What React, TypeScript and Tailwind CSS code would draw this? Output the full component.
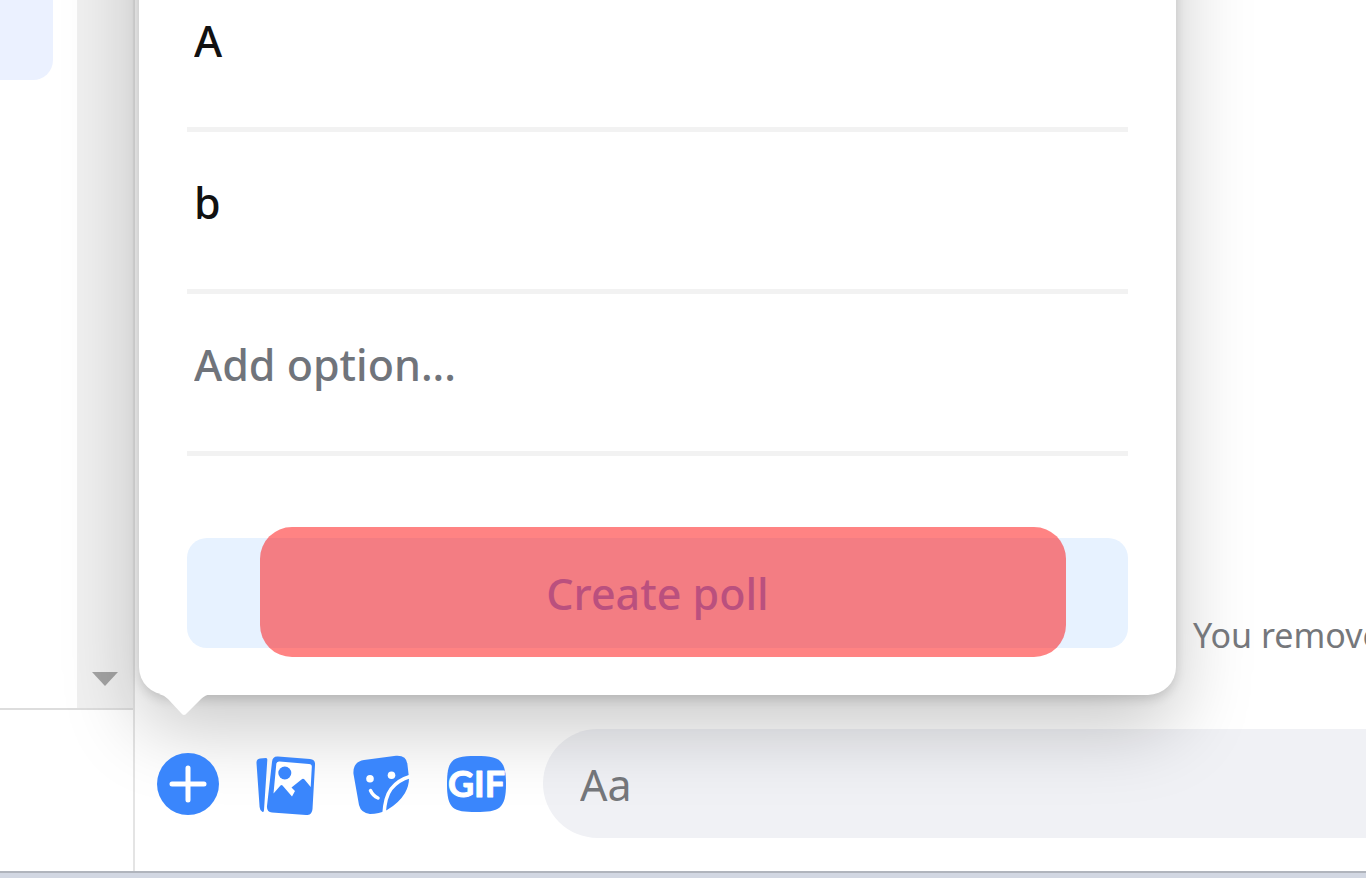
import React, { useState } from 'react';

interface OptionRowProps {
    label: string;
    value: string;
    placeholder?: string;
    onChange: (value: string) => void;
}

const OptionRow = ({ label, value, placeholder, onChange }: OptionRowProps) => (
    <input
        type="text"
        aria-label={label}
        value={value}
        placeholder={placeholder}
        onChange={e => onChange(e.target.value)}
        className="block w-full h-[162px] pl-[7px] pb-4 border-b-[5px] border-[#f2f2f2] bg-transparent text-[43px] font-medium text-[#111111] placeholder:text-[#70747b] placeholder:opacity-100 outline-none"
    />
);

const PlusIcon = () => (
    <svg viewBox="0 0 62 62" className="w-full h-full">
        <circle cx="31" cy="31" r="31" fill="#3a86fc" />
        <path d="M31 15v32M15 31h32" stroke="#fff" strokeWidth="5" strokeLinecap="round" />
    </svg>
);

const PhotosIcon = () => (
    <svg viewBox="0 0 62 62" className="w-full h-full">
        <path d="M7 5.500L13 5Q14.500 5 14.300 7L11 57Q10.800 60 9 58.500Q7 57.500 6.600 54L3.500 10Q3.300 6 7 5.500Z" fill="#3a86fc" />
        <path d="M25 3.500L57 6Q62.500 6.500 62 12L59.500 56Q59 62.500 53 62L19 59.500Q13.500 59 14 53L19 9Q19.500 3 25 3.500Z" fill="#3a86fc" />
        <path d="M26.500 8.500L56 11Q59 11.300 58.800 14L57.700 34L51.500 26.500Q50 25 48.500 26.500L38.500 34.500L42 38L39 43.500L29.500 32.500Q28.500 31.500 27.500 32.500L20.500 40.500L23.300 11Q23.600 8.200 26.500 8.500Z" fill="#fff" />
        <circle cx="31.800" cy="20" r="6.500" fill="#3a86fc" />
    </svg>
);

const StickerIcon = () => (
    <svg viewBox="0 0 62 62" className="w-full h-full">
        <path d="M15 7L47 2.700Q58 2 58.500 12L60 25Q60 33 56 40Q50 50 38 57Q30 61 21 61Q12 60 10 52L4.500 21Q3.500 9 15 7Z" fill="#3a86fc" />
        <path d="M61 23.500Q49 27 42 36Q36 44 35 61" fill="none" stroke="#fff" strokeWidth="3.500" />
        <circle cx="21" cy="25.700" r="3.800" fill="#fff" />
        <circle cx="42.500" cy="22.300" r="3.800" fill="#fff" />
        <path d="M21.500 37.500Q24 43 29 45" fill="none" stroke="#fff" strokeWidth="3.500" strokeLinecap="round" />
    </svg>
);

const GifIcon = () => (
    <svg viewBox="0 0 62 62" className="w-full h-full">
        <path d="M31 3C54 3 61 6 61 31S54 59 31 59S2 56 2 31S8 3 31 3Z" fill="#3a86fc" />
        <text x="31.500" y="44" textAnchor="middle" fill="#fff" stroke="#fff" strokeWidth="1" strokeLinejoin="round" className="font-[Lato,sans-serif] text-[36px] font-bold">GIF</text>
    </svg>
);

const ACTIONS = [
    { label: 'More actions', Icon: PlusIcon },
    { label: 'Attach photos', Icon: PhotosIcon },
    { label: 'Choose a sticker', Icon: StickerIcon },
    { label: 'Choose a GIF', Icon: GifIcon },
];

const Sidebar = () => (
    <aside className="w-[135px] shrink-0 flex flex-col border-r-2 border-[#e4e4e4]">
        <div className="flex-1 flex justify-between border-b-2 border-[#dddddd]">
            <div className="w-[53px] h-20 rounded-br-[20px] bg-[#ebf1ff]" />
            <div className="w-14 bg-[#f0f0f0] flex flex-col justify-end items-center pb-[22px]">
                <svg viewBox="0 0 26 14" className="w-[26px] h-[14px]">
                    <path d="M0 0h26L13 14z" fill="#a3a3a3" />
                </svg>
            </div>
        </div>
        <div className="h-[161px]" />
    </aside>
);

const PollPopover = () => {
    const [options, setOptions] = useState(['', 'A', 'b', '']);

    const update = (index: number, value: string) =>
        setOptions(options.map((o, i) => (i === index ? value : o)));

    return (
        <form
            onSubmit={e => e.preventDefault()}
            className="absolute left-1 bottom-[176px] w-[1037px] px-12 pt-16 pb-[47px] bg-white rounded-[28px] shadow-[0_32px_78px_rgba(0,0,0,0.22),0_4px_11px_rgba(0,0,0,0.14)]"
        >
            {options.map((option, i) => (
                <OptionRow
                    key={i}
                    label={`Option ${i}`}
                    value={option}
                    placeholder={i === options.length - 1 ? 'Add option...' : undefined}
                    onChange={value => update(i, value)}
                />
            ))}
            <div className="relative mt-[82px]">
                <button type="submit" className="block w-full h-[110px] pt-0.5 rounded-[20px] bg-[#e7f2ff] text-[43px] font-medium text-[#7499f5]">
                    Create poll
                </button>
                {/* Highlight over the submit button */}
                <div className="absolute left-[73px] right-[62px] -top-[11px] -bottom-[9px] rounded-[32px] bg-[#ff0808]/50 pointer-events-none" />
            </div>
            {/* Tail pointing at the plus button */}
            <svg viewBox="0 0 52 22" className="absolute left-5 top-full w-[52px] h-[22px] -mt-px">
                <path d="M0 0Q5 1 9 5L22 19Q25 23 28 19L42 5Q46 1 52 0Z" fill="#fff" />
            </svg>
        </form>
    );
};

const Composer = () => (
    <div className="flex items-center gap-9 pl-[22px] pb-[33px]">
        <div className="relative z-10 flex gap-[34px]">
            {ACTIONS.map(({ label, Icon }) => (
                <button key={label} type="button" aria-label={label} className="w-[62px] h-[62px]">
                    <Icon />
                </button>
            ))}
        </div>
        <input
            type="text"
            aria-label="Message"
            placeholder="Aa"
            className="flex-1 min-w-0 h-[109px] pl-[37px] pt-0.5 rounded-l-full bg-[#f0f1f5] text-[43px] placeholder:text-[#75777b] placeholder:opacity-100 outline-none"
        />
    </div>
);

export default function App() {
    return (
        <div className="h-screen flex flex-col overflow-hidden bg-white font-['Noto_Sans','Open_Sans',sans-serif]">
            <div className="flex-1 min-h-0 flex">
                <Sidebar />
                <main className="relative flex-1 min-w-0 flex flex-col">
                    <div className="flex-1 flex flex-col justify-end pl-[1058px] pb-[70px]">
                        <p className="relative z-10 text-[34px] leading-[48px] whitespace-nowrap text-[#75777b]">You remove</p>
                    </div>
                    <Composer />
                    <PollPopover />
                </main>
            </div>
            <footer className="h-[7px] shrink-0 border-t-2 border-[#b0b4bc] bg-[#d2d7e2]" />
        </div>
    );
}
